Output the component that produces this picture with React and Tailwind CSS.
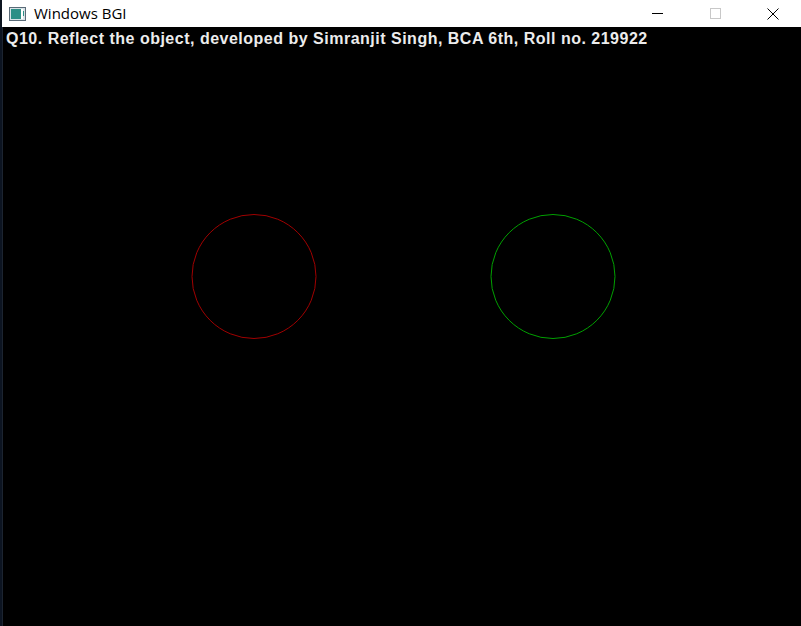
import React from 'react';

function TitleBar() {
    return (
        <div className="flex items-center h-[27px] bg-white">
            <div className="w-[2px] h-full bg-[#0d1520]" />
            <div className="ml-[7px] w-[17px] h-[14px] border border-[#5a6b78] bg-[#d8e2e6] flex p-[1px]">
                <div className="w-[10px] h-full bg-[#2d8f86]" />
                <div className="flex-1 bg-white" />
                <div className="w-[1px] h-[5px] mt-[2px] bg-[#2d8f86]" />
            </div>
            <span className="ml-[8px] text-[15px] text-black" style={{ fontFamily: '"Open Sans", "Noto Sans", sans-serif' }}>
                Windows BGI
            </span>
            <div className="ml-auto flex items-center h-full">
                <div className="w-[46px] h-full flex items-center justify-center">
                    <div className="w-[11px] h-[1px] bg-black" />
                </div>
                <div className="w-[46px] h-full flex items-center justify-center ml-[12px]">
                    <div className="w-[11px] h-[11px] border border-[#c8c8c8]" />
                </div>
                <div className="w-[46px] h-full flex items-center justify-center ml-[12px] mr-[5px]">
                    <svg width="12" height="12" viewBox="0 0 12 12">
                        <path d="M0.5 0.5 L11.5 11.5 M11.5 0.5 L0.5 11.5" stroke="#000" strokeWidth="1" />
                    </svg>
                </div>
            </div>
        </div>
    );
}

function App() {
    return (
        <div className="w-[801px] h-[626px] flex flex-col bg-black overflow-hidden">
            <TitleBar />
            <div className="flex flex-1">
                <div className="w-[3px] bg-[#0c1421] border-r border-[#1c2430]" />
                <div className="relative flex-1 bg-black">
                    <p
                        className="pt-[2px] pl-[3px] text-[16px] leading-[20px] font-bold text-[#ececec] tracking-[0.5px] whitespace-nowrap"
                        style={{ fontFamily: '"Liberation Sans", Arial, sans-serif' }}
                    >
                        Q10. Reflect the object, developed by Simranjit Singh, BCA 6th, Roll no. 219922
                    </p>
                    <svg className="absolute inset-0" width="797" height="599">
                        <circle cx="251" cy="249.5" r="62" fill="none" stroke="#a00000" strokeWidth="1" />
                        <circle cx="550" cy="249.5" r="62" fill="none" stroke="#00a000" strokeWidth="1" />
                    </svg>
                </div>
            </div>
        </div>
    );
}

export default App;
